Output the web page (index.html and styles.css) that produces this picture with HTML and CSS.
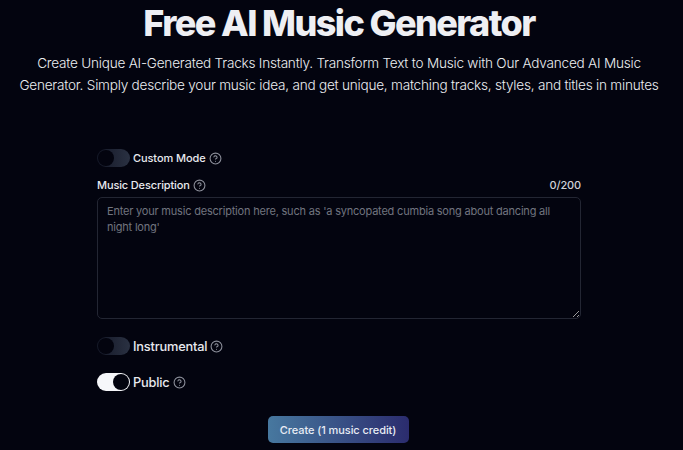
FILE: index.html
```html
<!DOCTYPE html>
<html lang="en">
<head>
  <meta charset="UTF-8">
  <title>Free AI Music Generator</title>
  <link rel="stylesheet" href="styles.css">
</head>
<body>
<svg class="svg-defs" width="0" height="0" aria-hidden="true">
  <symbol id="help" viewBox="0 0 24 24">
    <circle cx="12" cy="12" r="10" fill="none" stroke="currentColor" stroke-width="2"/>
    <path d="M9.1 9a3 3 0 0 1 5.8 1c0 2-3 3-3 3" fill="none" stroke="currentColor" stroke-width="2" stroke-linecap="round"/>
    <path d="M12 17h.01" fill="none" stroke="currentColor" stroke-width="2" stroke-linecap="round"/>
  </symbol>
</svg>

<header class="hero">
  <h1>Free AI Music Generator</h1>
  <p>Create Unique AI-Generated Tracks Instantly. Transform Text to Music with Our Advanced AI Music Generator. Simply describe your music idea, and get unique, matching tracks, styles, and titles in minutes</p>
</header>

<form class="generator">
  <div class="toggle-row custom-row">
    <span class="switch"><span class="knob"></span></span>
    <span class="toggle-label small">Custom Mode</span>
    <svg class="help"><use href="#help"/></svg>
  </div>

  <div class="desc-head">
    <div class="desc-title">
      <label for="desc">Music Description</label>
      <svg class="help"><use href="#help"/></svg>
    </div>
    <span class="count">0/200</span>
  </div>
  <textarea id="desc" placeholder="Enter your music description here, such as 'a syncopated cumbia song about dancing all night long'"></textarea>

  <div class="toggle-row instrumental-row">
    <span class="switch"><span class="knob"></span></span>
    <span class="toggle-label">Instrumental</span>
    <svg class="help"><use href="#help"/></svg>
  </div>

  <div class="toggle-row public-row">
    <span class="switch on"><span class="knob"></span></span>
    <span class="toggle-label">Public</span>
    <svg class="help"><use href="#help"/></svg>
  </div>

  <div class="actions">
    <button type="button" class="create-btn">Create (1 music credit)</button>
  </div>
</form>
</body>
</html>
```

FILE: styles.css
```css
html, body {
  height: 450px;
  overflow: hidden;
}
body {
  margin: 0;
  background: #03040f;
  color: #e8e9ee;
  font-family: 'Inter', 'Liberation Sans', sans-serif;
}
.svg-defs {
  display: block;
  height: 0;
}
.hero {
  padding: 0 21px 0 16px;
  text-align: center;
}
.hero h1 {
  margin: 0 -8px;
  height: 46px;
  font-size: 36px;
  line-height: 46px;
  font-weight: 800;
  letter-spacing: -1.6px;
  color: #eeeff3;
}
.hero p {
  margin: 6px -8px 0;
  font-size: 13.6px;
  line-height: 22px;
  font-weight: 300;
  letter-spacing: -0.23px;
  color: #eceef1;
}
.generator {
  width: 484px;
  margin: 53px 0 0 97px;
}
.toggle-row {
  display: flex;
  align-items: center;
  height: 18px;
}
.switch {
  display: block;
  width: 33px;
  height: 18px;
  border-radius: 9px;
  background: linear-gradient(90deg, #141827, #2a3142);
  box-sizing: border-box;
  padding: 1px;
  flex: none;
}
.knob {
  display: block;
  width: 16px;
  height: 16px;
  border-radius: 50%;
  background: #03040f;
}
.switch.on {
  background: #f6f7fa;
}
.switch.on .knob {
  margin-left: 15px;
}
.toggle-label {
  margin-left: 3px;
  font-size: 12.8px;
  font-weight: 500;
  letter-spacing: -0.18px;
  color: #e8e9ee;
}
.toggle-label.small {
  font-size: 11px;
  letter-spacing: -0.08px;
}
.help {
  width: 13px;
  height: 13px;
  margin-left: 3px;
  color: #8c8f9a;
  flex: none;
}
.desc-head {
  display: flex;
  justify-content: space-between;
  align-items: center;
  height: 16px;
  margin-top: 10px;
  font-size: 11px;
  font-weight: 500;
  letter-spacing: -0.14px;
  color: #e8e9ee;
}
.desc-title {
  display: flex;
  align-items: center;
}
.count {
  color: #d0d1d8;
}
textarea {
  display: block;
  box-sizing: border-box;
  width: 100%;
  height: 122px;
  margin-top: 4px;
  padding: 5px 9px;
  border: 1px solid #232633;
  border-radius: 5px;
  background: transparent;
  color: #e4e5ea;
  font-family: inherit;
  font-size: 11px;
  letter-spacing: -0.2px;
  line-height: 16px;
  outline: none;
}
textarea::placeholder {
  color: #71747f;
  opacity: 1;
}
.instrumental-row {
  margin-top: 18px;
}
.public-row {
  margin-top: 18px;
}
.actions {
  display: flex;
  justify-content: center;
  margin: 25px 2px 0 0;
}
.create-btn {
  width: 141px;
  height: 27px;
  padding: 0;
  border: none;
  border-radius: 5px;
  background: linear-gradient(90deg, #47789f, #2b2c6e);
  color: #e8ecf4;
  font-family: inherit;
  font-size: 11px;
  letter-spacing: -0.07px;
  font-weight: 500;
}
```
